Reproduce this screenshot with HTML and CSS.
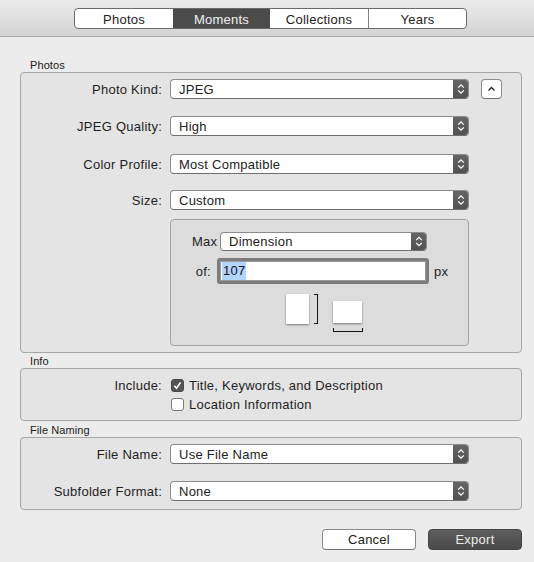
FILE: index.html
```html
<!DOCTYPE html>
<html>
<head>
<meta charset="utf-8">
<link rel="stylesheet" href="styles.css">
</head>
<body>
<div class="toolbar">
  <div class="seg">
    <div class="seg-item s1">Photos</div>
    <div class="seg-item s2 sel">Moments</div>
    <div class="seg-item s3">Collections</div>
    <div class="seg-item s4 div">Years</div>
  </div>
</div>

<div class="main">
  <div class="sec-label first">Photos</div>
  <div class="box box-photos">
    <div class="row">
      <div class="label">Photo Kind:</div>
      <div class="popup"><span class="pv">JPEG</span><span class="arrows"><svg width="16" height="20" viewBox="0 0 16 20"><path d="M5.2 8.6 L8 5.8 L10.8 8.6 M5.2 11.4 L8 14.2 L10.8 11.4" fill="none" stroke="#fff" stroke-width="1.3"/></svg></span></div>
      <div class="disc"><svg width="21" height="20" viewBox="0 0 21 20"><path d="M7.5 11.5 L10.5 8.5 L13.5 11.5" fill="none" stroke="#222" stroke-width="1.3"/></svg></div>
    </div>
    <div class="row">
      <div class="label">JPEG Quality:</div>
      <div class="popup"><span class="pv">High</span><span class="arrows"><svg width="16" height="20" viewBox="0 0 16 20"><path d="M5.2 8.6 L8 5.8 L10.8 8.6 M5.2 11.4 L8 14.2 L10.8 11.4" fill="none" stroke="#fff" stroke-width="1.3"/></svg></span></div>
    </div>
    <div class="row r3">
      <div class="label">Color Profile:</div>
      <div class="popup"><span class="pv">Most Compatible</span><span class="arrows"><svg width="16" height="20" viewBox="0 0 16 20"><path d="M5.2 8.6 L8 5.8 L10.8 8.6 M5.2 11.4 L8 14.2 L10.8 11.4" fill="none" stroke="#fff" stroke-width="1.3"/></svg></span></div>
    </div>
    <div class="row r4">
      <div class="label">Size:</div>
      <div class="popup"><span class="pv">Custom</span><span class="arrows"><svg width="16" height="20" viewBox="0 0 16 20"><path d="M5.2 8.6 L8 5.8 L10.8 8.6 M5.2 11.4 L8 14.2 L10.8 11.4" fill="none" stroke="#fff" stroke-width="1.3"/></svg></span></div>
    </div>
    <div class="sizebox">
      <div class="max-row">
        <span class="max-lbl">Max</span>
        <div class="popup popup-small"><span class="pv">Dimension</span><span class="arrows"><svg width="16" height="19" viewBox="0 0 16 19"><path d="M5.2 8.1 L8 5.3 L10.8 8.1 M5.2 10.9 L8 13.7 L10.8 10.9" fill="none" stroke="#fff" stroke-width="1.3"/></svg></span></div>
      </div>
      <div class="of-row">
        <span class="of-lbl">of:</span>
        <div class="field"><span class="selt">107</span></div>
        <span class="px">px</span>
      </div>
      <div class="orient">
        <div class="portrait"></div>
        <div class="vbracket"></div>
        <div class="land-col">
          <div class="landscape"></div>
          <div class="hbracket"></div>
        </div>
      </div>
    </div>
  </div>

  <div class="sec-label">Info</div>
  <div class="box box-info">
    <div class="crow">
      <div class="label">Include:</div>
      <span class="cb checked"><svg width="13" height="13" viewBox="0 0 13 13"><path d="M3.3 6.8 L5.5 9.2 L9.6 3.4" fill="none" stroke="#fff" stroke-width="1.6"/></svg></span>
      <span class="ctext">Title, Keywords, and Description</span>
    </div>
    <div class="crow">
      <div class="label"></div>
      <span class="cb"></span>
      <span class="ctext">Location Information</span>
    </div>
  </div>

  <div class="sec-label fn">File Naming</div>
  <div class="box box-naming">
    <div class="row">
      <div class="label">File Name:</div>
      <div class="popup"><span class="pv">Use File Name</span><span class="arrows"><svg width="16" height="20" viewBox="0 0 16 20"><path d="M5.2 8.6 L8 5.8 L10.8 8.6 M5.2 11.4 L8 14.2 L10.8 11.4" fill="none" stroke="#fff" stroke-width="1.3"/></svg></span></div>
    </div>
    <div class="row">
      <div class="label">Subfolder Format:</div>
      <div class="popup"><span class="pv">None</span><span class="arrows"><svg width="16" height="20" viewBox="0 0 16 20"><path d="M5.2 8.6 L8 5.8 L10.8 8.6 M5.2 11.4 L8 14.2 L10.8 11.4" fill="none" stroke="#fff" stroke-width="1.3"/></svg></span></div>
    </div>
  </div>

  <div class="buttons">
    <div class="btn cancel">Cancel</div>
    <div class="btn export">Export</div>
  </div>
</div>
</body>
</html>
```

FILE: styles.css
```css
* { box-sizing: border-box; }
html, body { margin: 0; padding: 0; }
body {
  background: #ececec;
  font-family: "Liberation Sans", Arial, sans-serif;
  font-size: 13px;
  letter-spacing: 0.25px;
  color: #1e1e1e;
  width: 534px;
  height: 562px;
  overflow: hidden;
}

/* toolbar */
.toolbar {
  height: 37px;
  background: linear-gradient(#ebebeb, #d4d4d4);
  border-bottom: 1px solid #a9a9a9;
  padding-top: 8px;
  padding-left: 74px;
}
.seg {
  display: flex;
  width: 393px;
  height: 21px;
  border: 1px solid #6a6a6a;
  border-radius: 4px;
  overflow: hidden;
  background: #fff;
}
.seg-item {
  display: flex;
  align-items: center;
  justify-content: center;
  height: 19px;
  padding-top: 1px;
  color: #222;
  font-size: 13px;
}
.s1 { width: 98px; }
.s2 { width: 97px; }
.s3 { width: 98px; }
.s4 { width: 98px; }
.seg-item.div { border-left: 1px solid #7f7f7f; }
.seg-item.sel { background: #4b4b4b; color: #f2f2f2; }

/* main */
.main {
  padding: 21px 12px 0 20px;
}
.sec-label {
  font-size: 11px;
  letter-spacing: 0.1px;
  line-height: 14px;
  height: 14px;
  padding-left: 10px;
  color: #1a1a1a;
  margin-top: 1px;
}
.sec-label.first { margin-top: 0; }
.sec-label.fn { margin-top: 2px; }

.box {
  width: 502px;
  background: #e4e4e4;
  border: 1px solid #a6a6a6;
  border-radius: 4px;
}
.box-photos { padding: 6px 0 6px 0; height: 281px; }
.box-info { padding: 7px 0 0 0; height: 53px; }
.box-naming { padding: 6px 0 0 0; height: 73px; }

.row {
  display: flex;
  align-items: center;
  height: 20px;
}
.row + .row { margin-top: 17px; }
.box-photos .row.r3 { margin-top: 18px; }
.box-photos .row.r4 { margin-top: 16px; }
.label {
  width: 141px;
  margin-right: 8px;
  text-align: right;
  white-space: nowrap;
}

.popup {
  display: flex;
  align-items: center;
  width: 299px;
  height: 20px;
  background: #fff;
  border: 1px solid #8c8c8c;
  border-bottom-color: #6f6f6f;
  border-radius: 4px;
  overflow: hidden;
}
.pv {
  flex: 1;
  padding-left: 8px;
  color: #222;
  white-space: nowrap;
}
.arrows {
  display: flex;
  width: 16px;
  height: 20px;
  margin: -1px -1px -1px 0;
  background: linear-gradient(#666, #505050);
  border-radius: 0 4px 4px 0;
}
.disc {
  width: 21px;
  height: 20px;
  margin-left: 12px;
  background: #fff;
  border: 1px solid #8c8c8c;
  border-bottom-color: #6f6f6f;
  border-radius: 4px;
  display: flex;
  align-items: center;
  justify-content: center;
}
.disc svg { margin: -1px; }

/* size box */
.sizebox {
  margin: 9px 0 0 149px;
  width: 299px;
  height: 127px;
  background: #dcdcdc;
  border: 1px solid #a3a3a3;
  border-radius: 4px;
  padding: 12px 0 0 21px;
}
.max-row {
  display: flex;
  align-items: center;
  height: 19px;
}
.max-lbl { width: 28px; }
.popup-small { width: 207px; height: 19px; }
.popup-small .arrows { height: 19px; }

.of-row {
  display: flex;
  align-items: center;
  height: 20px;
  margin-top: 10px;
}
.of-lbl {
  width: 28px;
  text-align: right;
  padding-right: 9px;
}
.field {
  width: 206px;
  height: 20px;
  background: #fff;
  border: 1px solid #9a9a9a;
  box-shadow: 0 0 0 3px #7c7c7c;
  border-radius: 1px;
  display: flex;
  align-items: center;
  padding-left: 1px;
}
.selt {
  background: #b3d4fc;
  color: #111;
  padding: 1px 1px 1px 1px;
  line-height: 16px;
}
.px { margin-left: 8px; }

.orient {
  display: flex;
  align-items: flex-start;
  margin: 13px 0 0 94px;
}
.portrait {
  width: 23px;
  height: 30px;
  background: #fff;
  box-shadow: 0 1px 2px rgba(0,0,0,0.45);
}
.vbracket {
  width: 4px;
  height: 30px;
  margin-left: 5px;
  border: 1px solid #111;
  border-left: none;
  border-right-width: 1.5px;
}
.land-col {
  margin-left: 15px;
  margin-top: 7px;
  display: flex;
  flex-direction: column;
}
.landscape {
  width: 29px;
  height: 22px;
  background: #fff;
  box-shadow: 0 1px 2px rgba(0,0,0,0.45);
}
.hbracket {
  width: 30px;
  height: 4px;
  margin-top: 5px;
  border: 1px solid #111;
  border-top: none;
  border-bottom-width: 1.5px;
}

/* checkboxes */
.crow {
  display: flex;
  align-items: center;
  height: 19px;
}
.cb {
  width: 13px;
  height: 13px;
  border-radius: 3px;
  background: #fff;
  border: 1px solid #7a7a7a;
  margin-left: 1px;
  display: flex;
}
.cb.checked {
  background: #555;
  border-color: #4a4a4a;
}
.cb.checked svg { margin: -1px; }
.ctext { margin-left: 5px; white-space: nowrap; }

/* buttons */
.buttons {
  display: flex;
  justify-content: flex-end;
  width: 502px;
  margin-top: 19px;
  gap: 12px;
}
.btn {
  width: 94px;
  height: 21px;
  border-radius: 4px;
  display: flex;
  align-items: center;
  justify-content: center;
}
.cancel {
  background: #fff;
  border: 1px solid #8a8a8a;
  border-bottom-color: #6f6f6f;
  color: #222;
}
.export {
  background: linear-gradient(#5e5e5e, #4a4a4a);
  border: 1px solid #444;
  color: #ececec;
}
```
